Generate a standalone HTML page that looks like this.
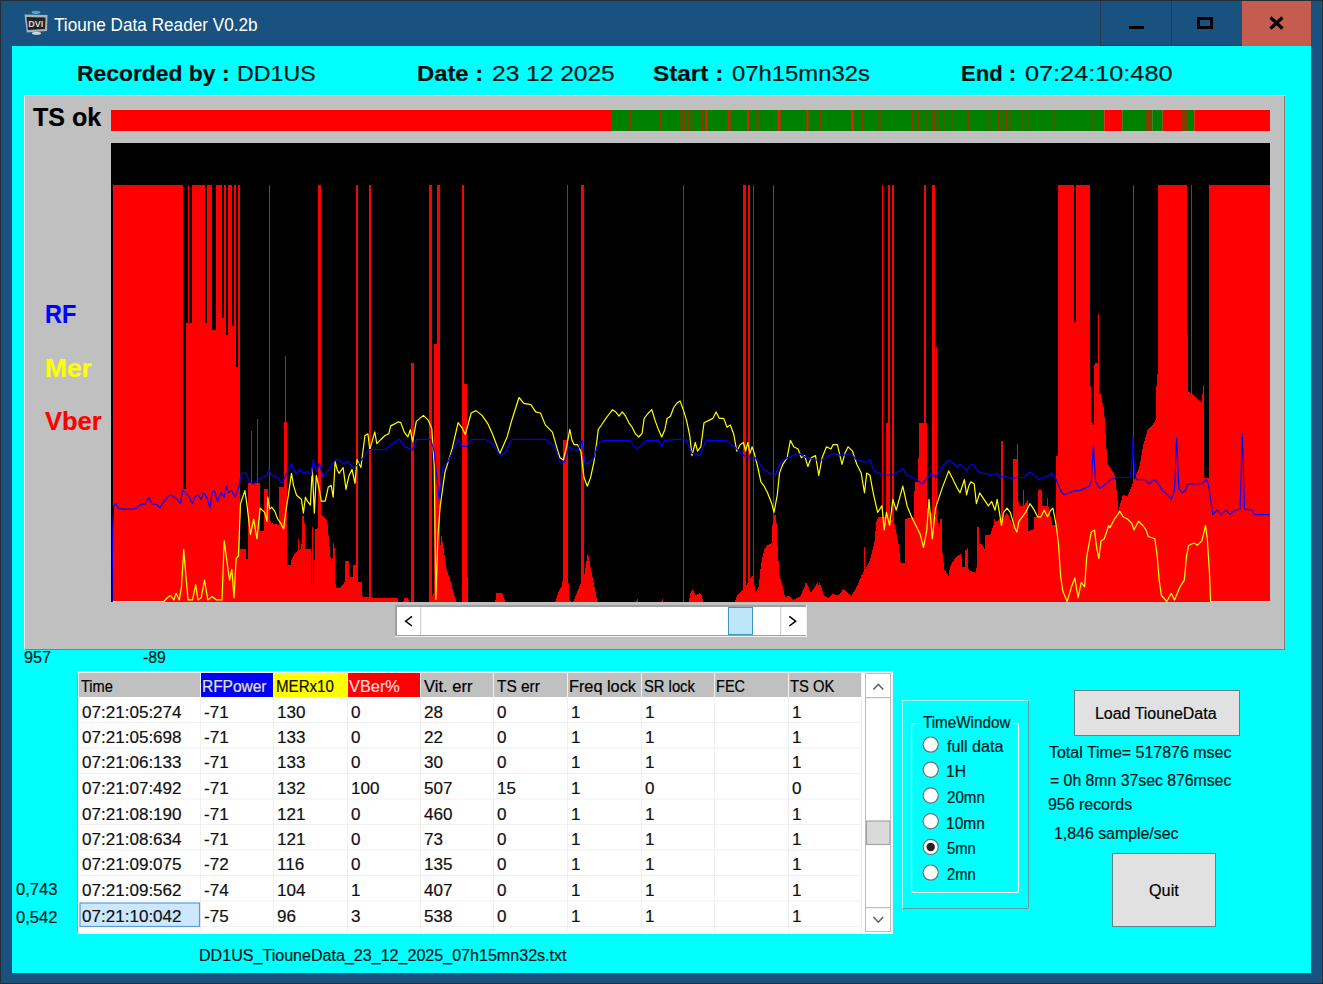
<!DOCTYPE html>
<html><head><meta charset="utf-8"><style>
html,body{margin:0;padding:0;width:1323px;height:984px;overflow:hidden;background:#19527e;}
body{position:relative;font-family:"Liberation Sans", sans-serif;}
.t{position:absolute;white-space:nowrap;line-height:1;transform-origin:0 0;-webkit-text-stroke:0.2px currentColor;}
.c{font-size:16.5px;color:#101010;}
.abs{position:absolute;}
svg{position:absolute;left:0;top:0;}
</style></head><body>
<div class="abs" style="left:0;top:0;width:1323px;height:984px;box-sizing:border-box;border:1px solid #252d36;"></div>
<svg width="1323" height="984" viewBox="0 0 1323 984">
<!-- title bar buttons -->
<rect x="1100" y="1" width="1" height="45" fill="#2b3a4a"/>
<rect x="1171" y="1" width="1" height="45" fill="#2b3a4a"/>
<rect x="1100" y="45" width="142" height="1" fill="#2b3a4a"/>
<rect x="1242" y="1" width="69" height="45" fill="#c45c50"/>
<rect x="1129" y="26" width="15" height="3" fill="#000"/>
<rect x="1198.5" y="18.5" width="13" height="9" fill="none" stroke="#000" stroke-width="3"/>
<path d="M1270.5,17.5 L1282.5,28.5 M1282.5,17.5 L1270.5,28.5" stroke="#000" stroke-width="3.2"/>
<!-- app icon -->
<g>
<ellipse cx="36" cy="12.3" rx="4.5" ry="1.6" fill="#4fa8cc"/>
<path d="M24.5,14.5 L47.5,15 L47,31 L26.8,32.5 Z" fill="#a4b2bd"/>
<path d="M26.5,17 L45.5,17.5 L45,29 L28,30 Z" fill="#222"/>
<text x="28.3" y="26.6" font-family="Liberation Sans" font-weight="bold" font-size="8.6" fill="#d4d4d4" textLength="15" lengthAdjust="spacingAndGlyphs">DVI</text>
<ellipse cx="36.5" cy="33.2" rx="4.5" ry="1.5" fill="#cfd8de"/>
</g>
<!-- client -->
<rect x="12" y="46" width="1299" height="927" fill="#00ffff"/>
<!-- chart panel -->
<rect x="24" y="95" width="1261" height="555" fill="#ffffff"/>
<rect x="25" y="96" width="1260" height="554" fill="#808080"/>
<rect x="25" y="96" width="1259" height="553" fill="#c0c0c0"/>
<rect x="111.0" y="110" width="501.0" height="21" fill="#ff0000"/><rect x="612.0" y="110" width="492.3" height="21" fill="#008000"/><rect x="1104.3" y="110" width="18.0" height="21" fill="#ff0000"/><rect x="1122.3" y="110" width="23.7" height="21" fill="#008000"/><rect x="1146.0" y="110" width="6.4" height="21" fill="#804000"/><rect x="1152.4" y="110" width="10.3" height="21" fill="#008000"/><rect x="1162.7" y="110" width="19.3" height="21" fill="#ff0000"/><rect x="1182.0" y="110" width="6.0" height="21" fill="#804000"/><rect x="1188.0" y="110" width="6.3" height="21" fill="#008000"/><rect x="1194.3" y="110" width="75.7" height="21" fill="#ff0000"/><rect x="628.8" y="110" width="2.0" height="21" fill="#8a3a00"/><rect x="659.0" y="110" width="2.0" height="21" fill="#8a3a00"/><rect x="680.5" y="110" width="2.0" height="21" fill="#8a3a00"/><rect x="684.0" y="110" width="2.0" height="21" fill="#8a3a00"/><rect x="688.0" y="110" width="2.0" height="21" fill="#8a3a00"/><rect x="691.0" y="110" width="1.5" height="21" fill="#8a3a00"/><rect x="701.0" y="110" width="2.0" height="21" fill="#a03000"/><rect x="705.4" y="110" width="2.0" height="21" fill="#e02000"/><rect x="727.5" y="110" width="3.0" height="21" fill="#c02800"/><rect x="747.0" y="110" width="2.0" height="21" fill="#e02000"/><rect x="756.5" y="110" width="2.0" height="21" fill="#8a3a00"/><rect x="777.5" y="110" width="3.0" height="21" fill="#e02000"/><rect x="806.5" y="110" width="2.0" height="21" fill="#e02000"/><rect x="819.5" y="110" width="2.0" height="21" fill="#8a3a00"/><rect x="851.0" y="110" width="3.0" height="21" fill="#e02000"/><rect x="862.0" y="110" width="2.0" height="21" fill="#8a3a00"/><rect x="878.5" y="110" width="2.0" height="21" fill="#8a3a00"/><rect x="912.0" y="110" width="2.0" height="21" fill="#8a3a00"/><rect x="917.5" y="110" width="2.0" height="21" fill="#8a3a00"/><rect x="925.0" y="110" width="1.5" height="21" fill="#8a3a00"/><rect x="931.0" y="110" width="1.5" height="21" fill="#8a3a00"/><rect x="934.0" y="110" width="1.5" height="21" fill="#8a3a00"/><rect x="938.5" y="110" width="1.5" height="21" fill="#8a3a00"/><rect x="943.0" y="110" width="1.5" height="21" fill="#8a3a00"/><rect x="952.5" y="110" width="1.5" height="21" fill="#8a3a00"/><rect x="968.0" y="110" width="1.5" height="21" fill="#8a3a00"/><rect x="987.0" y="110" width="1.5" height="21" fill="#8a3a00"/><rect x="997.5" y="110" width="2.0" height="21" fill="#8a3a00"/><rect x="1001.0" y="110" width="1.5" height="21" fill="#8a3a00"/><rect x="1006.0" y="110" width="1.5" height="21" fill="#8a3a00"/><rect x="1009.0" y="110" width="1.5" height="21" fill="#8a3a00"/><rect x="1022.5" y="110" width="1.5" height="21" fill="#8a3a00"/><rect x="1028.5" y="110" width="1.5" height="21" fill="#8a3a00"/><rect x="1053.0" y="110" width="1.5" height="21" fill="#8a3a00"/><rect x="1091.0" y="110" width="1.5" height="21" fill="#8a3a00"/>
<rect x="111" y="143" width="1159" height="459" fill="#000"/>
<path d="M111,602H111V602H113V185H183V489H186V323H188V185H189V323H192V185H205V323H207V185H212V330H216V185H222V318H224V185H226V335H228V185H232V326H234V185H236V367H238V185H240V549H246V559H248V483H251V431H252V483H257V419H258V483H260V531H264V489H268V498H269V185H270V521H271V523H273V524H277V525H279V487H284V422H285V356H286V422H287V565H291V560H292V558H293V556H294V554H295V553H296V552H297V551H298V539H299V550H300V549H301V544H302V516H304V523H305V549H311V584H312V527H313V584H314V560H315V529H317V528H318V185H321V515H322V516H323V517H324V518H325V519H326V520H327V524H328V535H329V546H330V557H331V563H332V558H333V543H334V548H335V584H336V588H340V587H341V586H342V585H343V584H344V582H345V561H349V577H353V565H356V185H358V582H362V596H363V597H369V185H371V597H373V598H398V602H403V601H404V598H408V600H409V602H411V363H414V602H429V185H432V596H433V593H434V344H437V185H440V545H441V536H442V542H443V548H444V555H445V563H446V569H447V572H448V575H449V577H450V581H451V585H452V589H453V593H454V596H455V599H456V602H462V185H464V384H467V577H468V602H495V600H496V593H502V594H503V597H504V599H505V602H555V601H556V598H557V595H558V592H559V590H560V588H561V587H562V581H563V440H567V185H568V583H569V600H570V601H571V602H573V601H574V599H575V596H576V594H577V591H578V589H579V586H580V584H581V185H584V574H585V568H586V561H587V555H588V556H589V561H590V567H591V572H592V577H593V582H594V587H595V592H596V597H597V601H598V602H636V601H637V599H638V602H661V601H662V599H663V602H683V185H684V602H689V598H690V593H691V591H692V590H693V591H694V593H695V595H697V594H699V593H700V594H701V595H702V599H703V602H735V600H736V597H737V595H738V594H739V593H740V592H741V591H742V590H743V185H746V585H747V583H748V185H750V578H751V577H752V576H753V185H754V586H755V593H756V591H757V589H758V587H759V579H760V569H761V562H762V557H763V553H764V549H765V548H766V546H767V545H769V544H771V543H772V525H773V185H774V515H776V523H777V546H778V561H779V576H780V579H781V583H782V586H783V590H784V595H785V597H787V596H790V597H791V598H792V599H793V600H794V599H796V598H798V597H800V596H801V594H802V591H803V589H804V587H805V583H807V585H808V587H809V590H810V592H812V590H813V589H814V587H815V586H816V584H817V583H818V585H819V583H820V585H821V588H822V591H823V594H824V596H826V597H828V598H829V597H830V596H831V595H832V594H835V595H839V594H840V593H841V592H842V590H843V589H844V590H845V591H846V592H847V593H848V594H850V595H851V596H852V594H853V592H854V591H855V589H856V587H857V585H858V583H859V580H860V578H861V575H862V574H863V572H864V547H865V569H866V567H867V565H868V563H869V561H870V558H871V554H872V550H873V546H874V541H875V531H876V521H877V519H878V517H882V185H883V517H886V423H888V185H890V519H891V520H892V185H894V524H895V529H896V534H897V539H898V544H899V553H900V562H901V563H905V519H907V518H911V517H914V491H915V482H918V458H919V423H924V185H926V423H927V508H928V509H929V511H930V512H931V513H932V185H935V517H936V347H937V519H938V523H939V528H940V519H942V553H943V562H944V570H945V571H946V573H947V574H948V576H949V570H950V566H951V564H952V562H953V561H954V559H955V558H956V557H957V556H958V555H960V554H961V557H962V567H965V550H967V548H968V569H969V571H972V572H975V573H976V568H977V527H979V544H982V545H983V547H984V549H985V535H990V534H991V531H992V528H993V525H994V519H995V522H996V521H998V520H999V519H1001V441H1003V519H1004V517H1005V515H1006V513H1007V514H1008V516H1009V518H1010V520H1011V522H1012V524H1013V459H1017V444H1018V502H1019V506H1023V490H1024V505H1025V503H1026V502H1027V500H1028V531H1030V530H1033V529H1034V517H1038V490H1042V506H1047V498H1048V507H1049V512H1050V516H1051V521H1052V525H1056V456H1058V185H1074V322H1076V185H1090V386H1091V422H1092V423H1093V425H1094V365H1095V363H1098V314H1099V394H1101V398H1102V403H1103V407H1104V417H1105V433H1106V449H1107V464H1108V465H1109V467H1110V468H1111V470H1112V471H1113V473H1114V475H1115V480H1116V490H1117V500H1118V510H1119V507H1120V503H1121V500H1122V496H1123V495H1125V496H1127V497H1128V494H1129V492H1130V489H1131V487H1132V484H1133V185H1134V479H1135V477H1136V474H1137V472H1138V469H1139V466H1140V461H1141V455H1142V449H1143V444H1144V441H1145V437H1146V434H1147V430H1148V429H1149V428H1150V427H1151V426H1152V425H1153V423H1154V422H1155V420H1156V386H1157V374H1158V185H1187V335H1188V392H1190V393H1191V185H1192V394H1193V395H1194V396H1195V397H1196V398H1197V399H1198V400H1199V401H1200V402H1202V394H1203V385H1204V478H1209V185H1270V602Z" fill="#ff0000"/>
<polyline points="112.7,601.5 164.0,601.5 167.3,597.7 170.6,595.5 173.9,599.9 176.1,593.3 179.3,599.9 181.5,586.8 183.7,549.6 185.9,575.8 188.1,599.9 192.5,599.9 195.7,584.6 197.9,599.9 201.2,597.7 204.5,580.2 207.8,599.9 212.1,596.6 216.5,599.9 222.0,599.9 224.2,540.9 227.4,564.9 229.6,580.2 231.8,569.3 234.0,597.7 236.2,558.3 238.4,556.2 240.5,503.7 244.9,490.6 247.1,505.9 250.4,534.3 253.7,519.0 256.9,538.7 260.2,508.1 264.6,512.4 267.0,521.2 267.7,497.2 269.7,509.1 271.7,507.1 274.7,511.1 277.7,519.0 280.6,523.0 283.6,529.0 285.6,513.1 288.6,493.3 291.5,473.4 293.5,485.3 296.5,495.2 301.4,499.2 303.4,513.1 305.4,497.2 307.4,501.2 310.4,505.2 312.3,467.5 314.3,513.1 316.3,475.4 319.3,489.3 321.3,501.2 325.2,501.2 328.2,487.3 331.2,485.3 333.2,497.2 335.1,461.5 337.1,469.5 339.1,473.4 343.1,467.5 346.0,489.3 349.0,475.4 352.0,469.5 355.0,483.4 357.0,459.6 360.9,467.5 364.9,435.8 367.9,433.8 369.8,449.7 374.8,431.8 376.8,443.7 380.7,439.7 384.7,435.8 388.7,433.8 390.7,425.9 394.6,423.9 398.0,421.9 400.8,422.6 404.3,432.1 407.9,436.9 410.3,429.7 412.7,441.7 416.3,421.4 423.4,415.4 428.2,420.2 431.8,428.5 434.2,465.6 435.9,599.3 437.8,537.2 440.2,506.2 444.9,472.7 452.1,448.8 458.1,422.6 461.7,427.3 465.3,434.5 471.2,413.0 476.0,410.6 482.0,415.4 487.9,423.8 492.7,434.5 499.9,453.6 507.1,436.9 511.8,420.2 519.0,397.5 523.8,403.4 530.9,404.6 535.7,411.8 540.5,413.0 545.3,424.9 552.4,432.1 557.2,448.8 560.0,457.8 563.3,460.0 566.6,446.8 569.8,429.4 572.0,440.3 574.2,444.7 577.5,444.7 580.8,451.2 584.0,477.5 587.3,486.2 590.6,477.5 593.9,462.1 596.1,446.8 598.3,429.4 601.5,425.0 605.9,418.4 609.2,414.0 612.5,409.7 615.7,411.9 619.0,416.2 622.3,411.9 625.6,416.2 628.9,422.8 632.1,427.2 635.4,433.7 638.7,437.0 642.0,433.7 644.2,418.4 647.5,414.0 651.8,409.7 655.1,420.6 658.4,429.4 661.7,437.0 664.9,429.4 667.1,418.4 670.4,416.2 673.7,407.5 677.0,403.1 680.0,400.9 683.3,409.7 686.6,420.6 689.8,435.9 692.0,455.6 695.3,442.5 697.5,451.2 700.8,446.8 704.0,422.8 708.4,420.6 712.8,418.4 716.1,411.9 719.4,418.4 723.7,418.4 727.0,427.2 730.3,425.0 733.6,433.7 736.8,451.2 740.1,444.7 743.4,442.5 745.6,451.2 747.8,442.5 750.0,453.4 752.1,446.8 754.3,453.4 757.6,466.5 760.9,481.8 764.2,486.2 767.5,492.8 771.8,503.7 774.0,512.4 777.3,494.9 779.5,473.1 782.8,464.3 787.1,457.8 790.4,440.3 793.7,446.8 798.1,449.0 801.3,457.8 804.6,455.6 807.9,466.5 811.2,457.8 815.5,455.6 818.8,475.3 822.1,457.8 826.5,446.8 830.9,449.0 833.0,444.7 837.4,444.7 842.0,464.3 844.8,453.4 848.1,446.8 852.5,451.2 856.8,464.3 861.2,473.1 864.5,492.8 866.7,473.1 870.0,475.3 873.2,492.8 877.6,512.4 882.0,505.9 884.2,529.9 886.4,512.4 889.6,525.5 892.9,499.3 896.2,510.2 902.8,486.2 907.1,505.9 911.5,516.8 915.9,525.5 920.2,534.3 923.5,547.4 926.8,529.9 929.0,499.3 932.3,538.7 935.5,508.1 942.1,488.4 948.7,470.9 953.0,479.6 957.4,488.4 960.0,492.8 962.2,486.2 964.4,479.6 966.6,494.9 968.7,486.2 970.9,481.8 974.2,484.0 976.4,503.7 979.7,492.8 984.0,499.3 988.4,505.9 991.7,501.5 995.0,510.2 997.2,499.3 999.4,512.4 1001.5,525.5 1003.7,512.4 1007.0,508.1 1010.3,512.4 1014.7,527.7 1016.8,532.1 1019.0,521.2 1022.3,516.8 1025.6,512.4 1030.0,503.7 1034.3,510.2 1037.6,516.8 1040.9,516.8 1044.2,510.2 1047.5,516.8 1050.7,510.2 1052.9,508.1 1056.2,525.5 1058.4,543.0 1060.6,575.8 1062.8,591.1 1067.1,601.5 1071.5,586.8 1074.8,578.0 1078.1,597.7 1081.3,582.4 1084.6,586.8 1086.8,556.2 1091.2,532.1 1094.5,529.9 1096.6,547.4 1098.8,558.3 1101.0,540.9 1104.3,538.7 1108.7,525.5 1110.0,527.7 1114.4,519.0 1117.7,514.6 1119.8,511.3 1123.1,516.8 1127.5,519.0 1131.9,523.4 1134.0,529.9 1138.4,521.2 1142.8,525.5 1146.1,529.9 1148.3,536.5 1154.8,538.7 1157.0,554.0 1159.2,580.2 1161.4,595.5 1166.8,601.5 1171.2,593.3 1174.5,599.9 1180.0,586.8 1184.3,580.2 1186.5,556.2 1188.7,545.2 1194.2,543.0 1197.5,545.2 1201.8,540.9 1204.0,532.1 1205.5,525.5 1207.3,538.7 1209.5,573.6 1210.6,601.5 1268.5,601.5 1270.0,601.5" fill="none" stroke="#ffff00" stroke-width="1.2" stroke-linejoin="round"/>
<polyline points="112.0,602.1 112.7,529.9 113.7,505.9 115.9,503.7 118.1,508.1 122.5,509.2 133.4,509.2 136.7,508.1 140.0,504.8 145.4,503.7 148.7,497.1 152.0,503.7 157.5,504.8 159.7,508.1 164.0,501.5 167.3,497.1 170.6,494.9 173.9,497.1 177.1,499.3 180.4,503.7 182.6,490.6 185.9,492.8 189.2,497.1 192.5,503.7 194.6,497.1 197.9,494.9 201.2,499.3 203.4,492.8 206.7,497.1 209.9,508.1 212.1,492.8 214.3,490.6 217.6,501.5 220.9,492.8 224.2,497.1 226.3,486.2 228.5,492.8 231.8,490.6 235.1,497.1 238.4,488.4 241.6,473.1 246.0,473.1 249.3,481.8 253.7,484.0 258.0,479.6 262.4,477.5 267.0,475.3 268.7,469.5 271.7,475.4 277.7,477.4 281.6,483.4 285.6,475.4 291.5,463.5 295.5,473.4 299.5,469.5 303.4,473.4 307.4,471.5 311.4,475.4 313.3,459.6 316.3,471.5 319.3,463.5 323.2,477.4 329.2,469.5 335.1,459.6 339.1,459.6 343.1,463.5 349.0,461.5 352.0,467.5 357.0,465.5 364.9,455.6 368.8,449.7 376.8,449.7 384.7,449.7 392.6,443.7 398.0,439.7 399.6,439.3 404.3,446.4 412.7,450.0 416.3,439.3 430.6,439.3 434.2,451.2 439.0,499.0 442.6,467.9 448.5,460.8 458.1,439.3 461.7,446.4 466.4,446.4 471.2,439.3 485.6,439.3 492.7,444.1 499.9,454.8 504.7,453.6 511.8,439.3 545.3,439.3 554.8,446.4 560.0,462.1 564.4,462.1 568.7,446.8 573.1,449.0 577.5,451.2 581.9,440.3 585.1,464.3 589.5,462.1 593.9,457.8 598.3,442.5 603.7,440.3 630.0,440.3 636.5,449.0 642.0,444.7 646.4,440.3 658.4,440.3 661.7,446.8 664.9,440.3 680.0,439.2 686.6,440.3 692.0,453.4 699.7,455.6 706.2,440.3 725.9,440.3 734.7,446.8 741.2,453.4 747.8,457.8 755.4,457.8 763.1,468.7 769.6,473.1 775.1,475.3 780.6,462.1 787.1,457.8 798.1,453.4 806.8,457.8 815.5,460.0 822.1,460.0 833.0,453.4 842.0,455.6 850.3,453.4 856.8,460.0 865.6,462.1 870.0,460.0 874.3,470.9 883.1,475.3 891.8,475.3 896.2,473.1 902.8,468.7 907.1,475.3 913.7,477.5 922.4,484.0 931.2,473.1 935.5,477.5 944.3,464.3 948.7,460.0 957.4,466.5 960.0,464.3 963.3,466.5 966.6,470.9 969.8,465.4 973.1,464.3 977.5,470.9 981.9,473.1 988.4,474.2 992.8,475.3 997.2,473.1 1000.4,478.5 1003.7,475.3 1007.0,477.5 1013.6,478.5 1017.9,477.5 1023.4,477.5 1030.0,472.0 1034.3,475.3 1038.7,479.6 1047.5,476.4 1051.8,473.1 1056.2,479.6 1060.6,490.6 1063.8,494.9 1069.3,492.8 1074.8,490.6 1079.2,490.6 1084.6,488.4 1089.0,486.2 1091.2,481.8 1093.4,444.7 1095.5,481.8 1099.9,488.4 1108.7,481.8 1110.0,479.6 1116.6,477.5 1130.8,477.5 1131.9,460.0 1133.0,438.1 1134.0,460.0 1135.1,477.5 1137.3,479.6 1145.0,479.6 1149.4,484.0 1153.7,479.6 1157.0,481.8 1162.5,490.6 1167.9,494.9 1171.2,499.3 1174.5,490.6 1175.6,464.3 1176.7,438.1 1177.8,464.3 1178.9,488.4 1182.1,492.8 1185.4,490.6 1187.6,484.0 1201.8,484.0 1206.2,479.6 1208.4,484.0 1210.6,499.3 1212.8,514.6 1217.1,510.2 1221.5,514.6 1225.9,510.2 1230.2,514.6 1234.6,510.2 1240.1,509.2 1241.2,470.9 1242.3,433.7 1243.4,470.9 1244.5,509.2 1252.1,510.2 1254.3,514.6 1268.5,514.6 1269.0,514.0" fill="none" stroke="#0000ff" stroke-width="1.2" stroke-linejoin="round"/>
<!-- chart scrollbar -->
<rect x="395" y="605" width="412" height="32" fill="#f0f0f0"/>
<rect x="395" y="605" width="411" height="31" fill="#a0a0a0"/>
<rect x="397" y="607" width="409" height="28" fill="#ffffff"/>
<rect x="420" y="607" width="1.2" height="28" fill="#d4d4d4"/>
<rect x="780" y="607" width="1.2" height="28" fill="#d4d4d4"/>
<rect x="728.5" y="607.5" width="24" height="27" fill="#bde6fb" stroke="#3c98c0" stroke-width="1"/>
<path d="M412,616.3 L405.6,621.2 L412,626" fill="none" stroke="#000" stroke-width="1.5"/>
<path d="M789.3,616.3 L795.7,621.2 L789.3,626" fill="none" stroke="#000" stroke-width="1.5"/>
<!-- table -->
<rect x="77" y="671" width="816" height="263" fill="#a0a0a0"/>
<rect x="77" y="671" width="816" height="2" fill="#f0f0f0"/>
<rect x="77" y="933" width="816" height="1" fill="#f0f0f0"/>
<rect x="891" y="671" width="2" height="263" fill="#f0f0f0"/>
<rect x="78" y="672" width="813" height="261" fill="#ffffff"/>
<rect x="79" y="673" width="783" height="24" fill="#c0c0c0"/>
<rect x="201" y="673" width="72" height="24" fill="#0000ff"/>
<rect x="274" y="673" width="73" height="24" fill="#ffff00"/>
<rect x="348" y="673" width="72" height="24" fill="#ff0000"/>
<rect x="200" y="673" width="1" height="24" fill="#ffffff"/>
<rect x="273" y="673" width="1" height="24" fill="#ffffff"/>
<rect x="347" y="673" width="1" height="24" fill="#ffffff"/>
<rect x="420" y="673" width="1" height="24" fill="#ffffff"/>
<rect x="200" y="673" width="1" height="260" fill="#f0f0f0"/><rect x="273" y="673" width="1" height="260" fill="#f0f0f0"/><rect x="347" y="673" width="1" height="260" fill="#f0f0f0"/><rect x="420" y="673" width="1" height="260" fill="#f0f0f0"/><rect x="493" y="673" width="1" height="260" fill="#f0f0f0"/><rect x="567" y="673" width="1" height="260" fill="#f0f0f0"/><rect x="641" y="673" width="1" height="260" fill="#f0f0f0"/><rect x="714" y="673" width="1" height="260" fill="#f0f0f0"/><rect x="788" y="673" width="1" height="260" fill="#f0f0f0"/><rect x="861" y="673" width="1" height="260" fill="#f0f0f0"/><rect x="79" y="722.0" width="783" height="1" fill="#f0f0f0"/><rect x="79" y="747.5" width="783" height="1" fill="#f0f0f0"/><rect x="79" y="773.0" width="783" height="1" fill="#f0f0f0"/><rect x="79" y="798.5" width="783" height="1" fill="#f0f0f0"/><rect x="79" y="824.0" width="783" height="1" fill="#f0f0f0"/><rect x="79" y="849.5" width="783" height="1" fill="#f0f0f0"/><rect x="79" y="875.0" width="783" height="1" fill="#f0f0f0"/><rect x="79" y="900.5" width="783" height="1" fill="#f0f0f0"/><rect x="79" y="926.0" width="783" height="1" fill="#f0f0f0"/>
<rect x="80" y="903" width="119.5" height="23.5" fill="#cce8ff" stroke="#5a9ad8" stroke-width="1.2"/>
<!-- table vscroll -->
<rect x="865.5" y="673.5" width="25" height="258" fill="#ffffff" stroke="#bdbdbd" stroke-width="1"/>
<rect x="866" y="697" width="24" height="1.2" fill="#bdbdbd"/>
<rect x="866" y="907" width="24" height="1.2" fill="#bdbdbd"/>
<rect x="866.5" y="821" width="23.5" height="23.5" fill="#dadada" stroke="#a6a6a6" stroke-width="1.2"/>
<path d="M873.5,689.5 L878.3,684.3 L883.2,689.5" fill="none" stroke="#606060" stroke-width="1.6"/>
<path d="M873.5,917 L878.3,922.2 L883.2,917" fill="none" stroke="#606060" stroke-width="1.6"/>
<!-- time window -->
<rect x="902.5" y="700.5" width="126" height="208" fill="none" stroke="#b8ffff" stroke-width="1"/>
<path d="M1028.5,700.5 V908.5 H902.5" fill="none" stroke="#5fa0a0" stroke-width="1"/>
<path d="M921,723.5 H914 Q911.5,723.5 911.5,726 V890 Q911.5,892.5 914,892.5 H1016 Q1018.5,892.5 1018.5,890 V726 Q1018.5,723.5 1016,723.5 H1013" fill="none" stroke="#ffffff" stroke-width="1.2"/>
<circle cx="930.7" cy="744.6" r="7.6" fill="#fff" stroke="#707070" stroke-width="1.2"/><circle cx="930.7" cy="769.8" r="7.6" fill="#fff" stroke="#707070" stroke-width="1.2"/><circle cx="930.7" cy="795.5" r="7.6" fill="#fff" stroke="#707070" stroke-width="1.2"/><circle cx="930.7" cy="821.2" r="7.6" fill="#fff" stroke="#707070" stroke-width="1.2"/><circle cx="930.7" cy="847.0" r="7.6" fill="#fff" stroke="#707070" stroke-width="1.2"/><circle cx="930.7" cy="847.0" r="4.2" fill="#222"/><circle cx="930.7" cy="872.6" r="7.6" fill="#fff" stroke="#707070" stroke-width="1.2"/>
<!-- buttons -->
<rect x="1074.5" y="690.5" width="165" height="45" fill="#e1e1e1" stroke="#5c8585" stroke-width="1"/>
<rect x="1112.5" y="853.5" width="103" height="73" fill="#e1e1e1" stroke="#5c8585" stroke-width="1"/>
</svg>
<div class="t" style="left:54.00px;top:16.00px;font-size:18.75px;-webkit-text-stroke:0;color:#fff;transform:scaleX(0.9156)">Tioune Data Reader V0.2b</div>
<div class="t" style="left:76.98px;top:63.00px;font-size:22.50px;font-weight:bold;color:#001010;transform:scaleX(1.0167)">Recorded by :</div>
<div class="t" style="left:236.97px;top:63.00px;font-size:22.50px;color:#001818;transform:scaleX(1.0315)">DD1US</div>
<div class="t" style="left:416.94px;top:63.00px;font-size:22.50px;font-weight:bold;color:#001010;transform:scaleX(1.0580)">Date :</div>
<div class="t" style="left:491.61px;top:63.00px;font-size:22.50px;color:#001818;transform:scaleX(1.0900)">23 12 2025</div>
<div class="t" style="left:652.80px;top:63.00px;font-size:22.50px;font-weight:bold;color:#001010;transform:scaleX(1.0817)">Start :</div>
<div class="t" style="left:732.30px;top:63.00px;font-size:22.50px;color:#001818;transform:scaleX(1.0597)">07h15mn32s</div>
<div class="t" style="left:961.02px;top:63.00px;font-size:22.50px;font-weight:bold;color:#001010;transform:scaleX(0.9805)">End :</div>
<div class="t" style="left:1024.90px;top:63.00px;font-size:22.50px;color:#001818;transform:scaleX(1.1226)">07:24:10:480</div>
<div class="t" style="left:33.30px;top:105.00px;font-size:25.75px;font-weight:bold;color:#000;transform:scaleX(0.9733)">TS ok</div>
<div class="t" style="left:45.09px;top:302.00px;font-size:25.75px;font-weight:bold;color:#0000ff;transform:scaleX(0.9112)">RF</div>
<div class="t" style="left:44.98px;top:356.00px;font-size:25.75px;font-weight:bold;color:#ffff00;transform:scaleX(1.0208)">Mer</div>
<div class="t" style="left:44.90px;top:409.00px;font-size:25.75px;font-weight:bold;color:#ff0000;transform:scaleX(0.9908)">Vber</div>
<div class="t" style="left:23.50px;top:650.00px;font-size:16.00px;color:#001818;transform:scaleX(1.0150)">957</div>
<div class="t" style="left:142.60px;top:650.00px;font-size:16.00px;color:#001818;transform:scaleX(0.9859)">-89</div>
<div class="t" style="left:923.00px;top:715.00px;font-size:15.75px;color:#001818;transform:scaleX(0.9664)">TimeWindow</div>
<div class="t" style="left:946.80px;top:739.00px;font-size:15.75px;color:#001818;transform:scaleX(1.0216)">full data</div>
<div class="t" style="left:945.81px;top:764.00px;font-size:15.75px;color:#001818;transform:scaleX(0.9915)">1H</div>
<div class="t" style="left:946.80px;top:790.00px;font-size:15.75px;color:#001818;transform:scaleX(0.9602)">20mn</div>
<div class="t" style="left:945.81px;top:816.00px;font-size:15.75px;color:#001818;transform:scaleX(0.9857)">10mn</div>
<div class="t" style="left:946.80px;top:841.00px;font-size:15.75px;color:#001818;transform:scaleX(0.9371)">5mn</div>
<div class="t" style="left:946.80px;top:867.00px;font-size:15.75px;color:#001818;transform:scaleX(0.9371)">2mn</div>
<div class="t" style="left:1094.60px;top:706.00px;font-size:16.00px;color:#000;transform:scaleX(0.9970)">Load TiouneData</div>
<div class="t" style="left:1049.00px;top:745.00px;font-size:16.00px;color:#001818;transform:scaleX(0.9981)">Total Time= 517876 msec</div>
<div class="t" style="left:1049.50px;top:773.00px;font-size:16.00px;color:#001818;transform:scaleX(0.9871)">= 0h 8mn 37sec 876msec</div>
<div class="t" style="left:1048.30px;top:797.00px;font-size:16.00px;color:#001818;transform:scaleX(0.9954)">956 records</div>
<div class="t" style="left:1053.71px;top:826.00px;font-size:16.00px;color:#001818;transform:scaleX(0.9927)">1,846 sample/sec</div>
<div class="t" style="left:1148.60px;top:882.00px;font-size:17.00px;color:#000;transform:scaleX(0.9538)">Quit</div>
<div class="t" style="left:15.80px;top:882.00px;font-size:16.00px;color:#001818;transform:scaleX(1.0364)">0,743</div>
<div class="t" style="left:15.80px;top:910.00px;font-size:16.00px;color:#001818;transform:scaleX(1.0364)">0,542</div>
<div class="t" style="left:199.30px;top:948.00px;font-size:16.00px;color:#001818;transform:scaleX(1.0045)">DD1US_TiouneData_23_12_2025_07h15mn32s.txt</div>
<div class="t" style="left:81.40px;top:679.00px;font-size:15.75px;color:#000;transform:scaleX(0.9263)">Time</div>
<div class="t" style="left:202.32px;top:679.00px;font-size:15.75px;color:#e4e4a8;transform:scaleX(0.9815)">RFPower</div>
<div class="t" style="left:276.34px;top:679.00px;font-size:15.75px;color:#101000;transform:scaleX(0.9592)">MERx10</div>
<div class="t" style="left:348.90px;top:679.00px;font-size:15.75px;color:#ffd8d8;transform:scaleX(1.0385)">VBer%</div>
<div class="t" style="left:424.00px;top:679.00px;font-size:15.75px;color:#000;transform:scaleX(1.0512)">Vit. err</div>
<div class="t" style="left:497.00px;top:679.00px;font-size:15.75px;color:#000;transform:scaleX(0.9792)">TS err</div>
<div class="t" style="left:568.97px;top:679.00px;font-size:15.75px;color:#000;transform:scaleX(1.0330)">Freq lock</div>
<div class="t" style="left:644.00px;top:679.00px;font-size:15.75px;color:#000;transform:scaleX(0.9377)">SR lock</div>
<div class="t" style="left:716.48px;top:679.00px;font-size:15.75px;color:#000;transform:scaleX(0.9228)">FEC</div>
<div class="t" style="left:790.40px;top:679.00px;font-size:15.75px;color:#000;transform:scaleX(0.9382)">TS OK</div>
<div class="t c" style="left:81.6px;top:704.00px;transform:scaleX(1.0336)">07:21:05:274</div>
<div class="t c" style="left:203.6px;top:704.00px;transform:scaleX(1.0336)">-71</div>
<div class="t c" style="left:276.6px;top:704.00px;transform:scaleX(1.0336)">130</div>
<div class="t c" style="left:350.6px;top:704.00px;transform:scaleX(1.0336)">0</div>
<div class="t c" style="left:423.6px;top:704.00px;transform:scaleX(1.0336)">28</div>
<div class="t c" style="left:496.6px;top:704.00px;transform:scaleX(1.0336)">0</div>
<div class="t c" style="left:570.6px;top:704.00px;transform:scaleX(1.0336)">1</div>
<div class="t c" style="left:644.6px;top:704.00px;transform:scaleX(1.0336)">1</div>
<div class="t c" style="left:791.6px;top:704.00px;transform:scaleX(1.0336)">1</div>
<div class="t c" style="left:81.6px;top:729.00px;transform:scaleX(1.0336)">07:21:05:698</div>
<div class="t c" style="left:203.6px;top:729.00px;transform:scaleX(1.0336)">-71</div>
<div class="t c" style="left:276.6px;top:729.00px;transform:scaleX(1.0336)">133</div>
<div class="t c" style="left:350.6px;top:729.00px;transform:scaleX(1.0336)">0</div>
<div class="t c" style="left:423.6px;top:729.00px;transform:scaleX(1.0336)">22</div>
<div class="t c" style="left:496.6px;top:729.00px;transform:scaleX(1.0336)">0</div>
<div class="t c" style="left:570.6px;top:729.00px;transform:scaleX(1.0336)">1</div>
<div class="t c" style="left:644.6px;top:729.00px;transform:scaleX(1.0336)">1</div>
<div class="t c" style="left:791.6px;top:729.00px;transform:scaleX(1.0336)">1</div>
<div class="t c" style="left:81.6px;top:754.00px;transform:scaleX(1.0336)">07:21:06:133</div>
<div class="t c" style="left:203.6px;top:754.00px;transform:scaleX(1.0336)">-71</div>
<div class="t c" style="left:276.6px;top:754.00px;transform:scaleX(1.0336)">133</div>
<div class="t c" style="left:350.6px;top:754.00px;transform:scaleX(1.0336)">0</div>
<div class="t c" style="left:423.6px;top:754.00px;transform:scaleX(1.0336)">30</div>
<div class="t c" style="left:496.6px;top:754.00px;transform:scaleX(1.0336)">0</div>
<div class="t c" style="left:570.6px;top:754.00px;transform:scaleX(1.0336)">1</div>
<div class="t c" style="left:644.6px;top:754.00px;transform:scaleX(1.0336)">1</div>
<div class="t c" style="left:791.6px;top:754.00px;transform:scaleX(1.0336)">1</div>
<div class="t c" style="left:81.6px;top:780.00px;transform:scaleX(1.0336)">07:21:07:492</div>
<div class="t c" style="left:203.6px;top:780.00px;transform:scaleX(1.0336)">-71</div>
<div class="t c" style="left:276.6px;top:780.00px;transform:scaleX(1.0336)">132</div>
<div class="t c" style="left:350.6px;top:780.00px;transform:scaleX(1.0336)">100</div>
<div class="t c" style="left:423.6px;top:780.00px;transform:scaleX(1.0336)">507</div>
<div class="t c" style="left:496.6px;top:780.00px;transform:scaleX(1.0336)">15</div>
<div class="t c" style="left:570.6px;top:780.00px;transform:scaleX(1.0336)">1</div>
<div class="t c" style="left:644.6px;top:780.00px;transform:scaleX(1.0336)">0</div>
<div class="t c" style="left:791.6px;top:780.00px;transform:scaleX(1.0336)">0</div>
<div class="t c" style="left:81.6px;top:806.00px;transform:scaleX(1.0336)">07:21:08:190</div>
<div class="t c" style="left:203.6px;top:806.00px;transform:scaleX(1.0336)">-71</div>
<div class="t c" style="left:276.6px;top:806.00px;transform:scaleX(1.0336)">121</div>
<div class="t c" style="left:350.6px;top:806.00px;transform:scaleX(1.0336)">0</div>
<div class="t c" style="left:423.6px;top:806.00px;transform:scaleX(1.0336)">460</div>
<div class="t c" style="left:496.6px;top:806.00px;transform:scaleX(1.0336)">0</div>
<div class="t c" style="left:570.6px;top:806.00px;transform:scaleX(1.0336)">1</div>
<div class="t c" style="left:644.6px;top:806.00px;transform:scaleX(1.0336)">1</div>
<div class="t c" style="left:791.6px;top:806.00px;transform:scaleX(1.0336)">1</div>
<div class="t c" style="left:81.6px;top:831.00px;transform:scaleX(1.0336)">07:21:08:634</div>
<div class="t c" style="left:203.6px;top:831.00px;transform:scaleX(1.0336)">-71</div>
<div class="t c" style="left:276.6px;top:831.00px;transform:scaleX(1.0336)">121</div>
<div class="t c" style="left:350.6px;top:831.00px;transform:scaleX(1.0336)">0</div>
<div class="t c" style="left:423.6px;top:831.00px;transform:scaleX(1.0336)">73</div>
<div class="t c" style="left:496.6px;top:831.00px;transform:scaleX(1.0336)">0</div>
<div class="t c" style="left:570.6px;top:831.00px;transform:scaleX(1.0336)">1</div>
<div class="t c" style="left:644.6px;top:831.00px;transform:scaleX(1.0336)">1</div>
<div class="t c" style="left:791.6px;top:831.00px;transform:scaleX(1.0336)">1</div>
<div class="t c" style="left:81.6px;top:856.00px;transform:scaleX(1.0336)">07:21:09:075</div>
<div class="t c" style="left:203.6px;top:856.00px;transform:scaleX(1.0336)">-72</div>
<div class="t c" style="left:276.6px;top:856.00px;transform:scaleX(1.0336)">116</div>
<div class="t c" style="left:350.6px;top:856.00px;transform:scaleX(1.0336)">0</div>
<div class="t c" style="left:423.6px;top:856.00px;transform:scaleX(1.0336)">135</div>
<div class="t c" style="left:496.6px;top:856.00px;transform:scaleX(1.0336)">0</div>
<div class="t c" style="left:570.6px;top:856.00px;transform:scaleX(1.0336)">1</div>
<div class="t c" style="left:644.6px;top:856.00px;transform:scaleX(1.0336)">1</div>
<div class="t c" style="left:791.6px;top:856.00px;transform:scaleX(1.0336)">1</div>
<div class="t c" style="left:81.6px;top:882.00px;transform:scaleX(1.0336)">07:21:09:562</div>
<div class="t c" style="left:203.6px;top:882.00px;transform:scaleX(1.0336)">-74</div>
<div class="t c" style="left:276.6px;top:882.00px;transform:scaleX(1.0336)">104</div>
<div class="t c" style="left:350.6px;top:882.00px;transform:scaleX(1.0336)">1</div>
<div class="t c" style="left:423.6px;top:882.00px;transform:scaleX(1.0336)">407</div>
<div class="t c" style="left:496.6px;top:882.00px;transform:scaleX(1.0336)">0</div>
<div class="t c" style="left:570.6px;top:882.00px;transform:scaleX(1.0336)">1</div>
<div class="t c" style="left:644.6px;top:882.00px;transform:scaleX(1.0336)">1</div>
<div class="t c" style="left:791.6px;top:882.00px;transform:scaleX(1.0336)">1</div>
<div class="t c" style="left:81.6px;top:908.00px;transform:scaleX(1.0336)">07:21:10:042</div>
<div class="t c" style="left:203.6px;top:908.00px;transform:scaleX(1.0336)">-75</div>
<div class="t c" style="left:276.6px;top:908.00px;transform:scaleX(1.0336)">96</div>
<div class="t c" style="left:350.6px;top:908.00px;transform:scaleX(1.0336)">3</div>
<div class="t c" style="left:423.6px;top:908.00px;transform:scaleX(1.0336)">538</div>
<div class="t c" style="left:496.6px;top:908.00px;transform:scaleX(1.0336)">0</div>
<div class="t c" style="left:570.6px;top:908.00px;transform:scaleX(1.0336)">1</div>
<div class="t c" style="left:644.6px;top:908.00px;transform:scaleX(1.0336)">1</div>
<div class="t c" style="left:791.6px;top:908.00px;transform:scaleX(1.0336)">1</div>
</body></html>
